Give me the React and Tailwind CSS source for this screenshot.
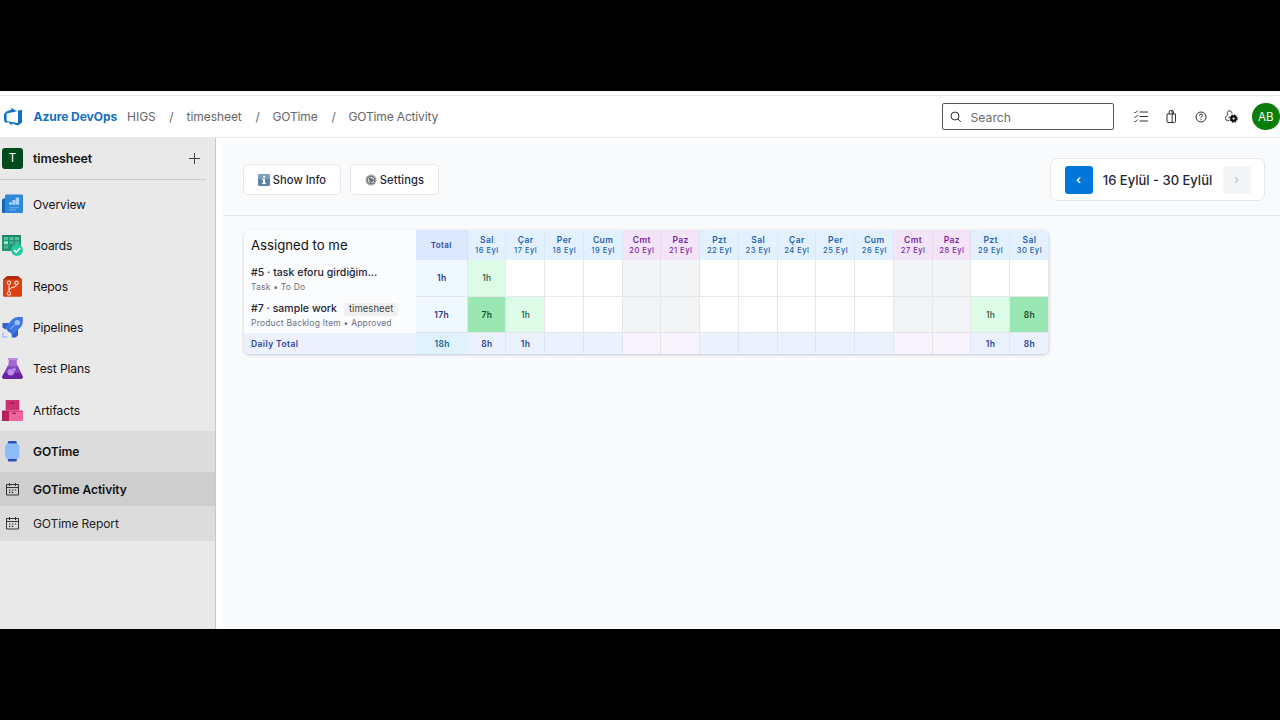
import React from 'react'

const days = [
    { name: 'Sal', date: '16 Eyl' },
    { name: 'Çar', date: '17 Eyl' },
    { name: 'Per', date: '18 Eyl' },
    { name: 'Cum', date: '19 Eyl' },
    { name: 'Cmt', date: '20 Eyl', weekend: true },
    { name: 'Paz', date: '21 Eyl', weekend: true },
    { name: 'Pzt', date: '22 Eyl' },
    { name: 'Sal', date: '23 Eyl' },
    { name: 'Çar', date: '24 Eyl' },
    { name: 'Per', date: '25 Eyl' },
    { name: 'Cum', date: '26 Eyl' },
    { name: 'Cmt', date: '27 Eyl', weekend: true },
    { name: 'Paz', date: '28 Eyl', weekend: true },
    { name: 'Pzt', date: '29 Eyl' },
    { name: 'Sal', date: '30 Eyl' },
]

const tasks = [
    { title: '#5 · task eforu girdiğim...', meta: 'Task • To Do', total: '1h', hours: { 0: 1 } },
    { title: '#7 · sample work', tag: 'timesheet', meta: 'Product Backlog Item • Approved', total: '17h', hours: { 0: 7, 1: 1, 13: 1, 14: 8 } },
]

const dailyTotals = { 0: 8, 1: 1, 13: 1, 14: 8 }

const gridCols = 'grid grid-cols-[172px_51.5px_repeat(15,38.75px)]'

/* ICONS */
const DevOpsLogo = () => (
    <svg width="20" height="20" viewBox="0 0 20 20" className="shrink-0">
        <path fill="#1170c4" fillRule="evenodd" d="M1 7.2 3 4.7 8.4 2.6V.8l5 3.2 5.6-1.3V15.4l-3.9 3.2-6.4-2.1v1.9L5 15.1 2.7 15.9 1 13.6ZM3.6 6.6v6.9l1.7 1.1 9.7 1.4V3.9Z" />
    </svg>
)

const OverviewIcon = () => (
    <svg width="21" height="20" viewBox="0 0 21 20">
        <path fill="#1565b5" d="M0 5.5 3 4v15H1.2A1.2 1.2 0 0 1 0 17.8Z" />
        <rect x="3" y=".5" width="18" height="18.5" rx="1" fill="#2f87d9" />
        <path fill="#9fd3fb" d="M7 8.2h3v2.6H7zM10.3 6h3v4.8h-3zM13.6 3.5h3.6v7.3h-3.6z" />
        <path fill="#69b4f1" d="M7 13.3h10v1H7zM7 15.5h7v1H7z" />
    </svg>
)

const BoardsIcon = () => (
    <svg width="21" height="21" viewBox="0 0 21 21">
        <rect y="0" width="19" height="16" rx=".8" fill="#219473" />
        <path fill="#118263" d="M0 0h19v1.5H0z" />
        <path fill="#56bd9d" d="M2 2h4v3H2zM7.5 2h4v3h-4zM13 2h4v3h-4z" />
        <path fill="#4db394" d="M7.5 6.2h4v3h-4zM13 6.2h4v3h-4zM2 10.5h4v3H2z" />
        <path fill="#94efd0" d="M2 6.2h4v3H2z" />
        <circle cx="15" cy="15" r="5.9" fill="#23c9a0" />
        <path d="m12 15 2.2 2.2 4-4.1" fill="none" stroke="#fff" strokeWidth="1.6" />
    </svg>
)

const ReposIcon = () => (
    <svg width="21" height="21" viewBox="0 0 21 21">
        <path fill="#b32a0c" d="M5 0h11l4 3.5v3H1v-3z" />
        <path fill="#dc4010" d="M1 3.5h19v16a1.3 1.3 0 0 1-1.3 1.3H2.3A1.3 1.3 0 0 1 1 19.5z" />
        <g fill="none" stroke="#ffd9cb" strokeWidth="1.1">
            <circle cx="7" cy="6.8" r="1.7" />
            <circle cx="14.5" cy="6.8" r="1.7" />
            <circle cx="7" cy="17.5" r="1.7" />
            <path d="M7 8.5v7.3M14.5 8.5c0 4-7.5 1.5-7.5 6.5" />
        </g>
    </svg>
)

const PipelinesIcon = () => (
    <svg width="21" height="21" viewBox="0 0 21 21">
        <path fill="#2d62d2" d="M.5 6h7l-4 6.500-3-2zM9.500 17l6.500-6v7.500L13.500 20.500H10z" />
        <path fill="#3f79e0" d="M20.800 0v4.500c0 3.500-2 6-5 8.500l-5.500 4.800-7-6.600L8 4.800C10.500 1.800 13 0 16.300 0z" />
        <path d="m6 14 7-6.500" stroke="#3266cd" strokeWidth="2.500" />
        <path d="m8 12.300 6.500-6" stroke="#78a6f6" strokeWidth="1.500" />
        <circle cx="15.300" cy="5.600" r="2.700" fill="#9dbffa" />
        <path fill="#a9c6f8" d="M0 15.500h1.800v3.500h3.500v1.800H0z" />
        <path fill="#dfe7f8" d="m2.500 12.800 5 5-2.700.9-3-3z" />
    </svg>
)

const TestPlansIcon = () => (
    <svg width="21" height="21" viewBox="0 0 21 21">
        <path fill="#a066d3" d="M6.7 0h8v5.8l5.7 12A2.1 2.1 0 0 1 18.5 21h-16A2.1 2.1 0 0 1 .6 17.8l6.1-12z" />
        <path fill="#7f42bb" d="M5.500 8.500h10.400l4.500 9.500a2 2 0 0 1-1.900 3h-16a2 2 0 0 1-1.900-3z" />
        <path fill="#6822a2" d="M2.200 15h16.600l1.600 3a2 2 0 0 1-1.900 3h-16a2 2 0 0 1-1.900-3z" />
        <path fill="#b98ce0" d="M6 0h9.500v2H6z" />
        <circle cx="8.800" cy="14.200" r="3.300" fill="#bd8be8" />
        <circle cx="12" cy="11.500" r="2" fill="#b27edf" />
    </svg>
)

const ArtifactsIcon = () => (
    <svg width="21" height="21" viewBox="0 0 21 21">
        <path fill="#c9316f" d="M3.7 0h13.6v10.5H3.7z" />
        <path fill="#b5205f" d="M0 10.5h7V21H0z" />
        <path fill="#dc3d7b" d="M7 10.5h14V14H7z" />
        <path fill="#f0649c" d="M7 12h14v9H7z" />
        <path fill="#861347" d="M9 2.5h3v1.2H9zM10.5 12.7h3v1.2h-3z" />
    </svg>
)

const WatchIcon = () => (
    <svg width="21" height="21" viewBox="0 0 21 21">
        <rect x="5.8" y="0" width="9" height="5" rx="1.5" fill="#2c50b5" />
        <rect x="5.8" y="15.5" width="9" height="5" rx="1.5" fill="#2c50b5" />
        <rect x="3" y="2.6" width="14.5" height="15.5" rx="3.5" fill="#8dbdf8" />
    </svg>
)

const CalendarIcon = () => (
    <svg width="13" height="13" viewBox="0 0 13 13" fill="none" stroke="#222" strokeWidth=".9">
        <path d="M.5 1.5h12v10.500H.5zM.5 4.500h12M3.500 0v3M9.500 0v3" />
        <path d="M3 7h1.300M5.900 7h1.300M8.800 7h1.300M3 9.300h1.300M5.900 9.300h1.300" strokeWidth="1.200" />
    </svg>
)

const navItems = [
    { label: 'Overview', icon: <OverviewIcon /> },
    { label: 'Boards', icon: <BoardsIcon /> },
    { label: 'Repos', icon: <ReposIcon /> },
    { label: 'Pipelines', icon: <PipelinesIcon /> },
    { label: 'Test Plans', icon: <TestPlansIcon /> },
    { label: 'Artifacts', icon: <ArtifactsIcon /> },
]

const Header = () => (
    <header className="h-[47px] shrink-0 flex flex-col bg-white border-b border-[#e9e9e9]">
        <div className="h-[5px] border-b border-[#e6e3f0]" />
        <div className="flex-1 flex items-center pl-[3px]">
            <DevOpsLogo />
            <div className="flex ml-[10.5px] pt-px text-[12px] tracking-[-0.15px] text-[#666] whitespace-nowrap">
                <span className="w-[93.5px] font-bold tracking-[-0.05px] text-[#1270c5]">Azure DevOps</span>
                <span className="w-[29px] tracking-normal">HIGS</span>
                <span className="w-[30.5px] text-center">/</span>
                <span className="w-[56px] tracking-[-0.05px]">timesheet</span>
                <span className="w-[30px] text-center">/</span>
                <span className="w-[46px]">GOTime</span>
                <span className="w-[30px] text-center">/</span>
                <span className="w-[90px]">GOTime Activity</span>
            </div>

            {/* SEARCH */}
            <div className="ml-auto w-[172px] h-[27px] flex items-center border border-[#555] rounded-[2px] pl-[7px] mr-5">
                <svg width="12" height="12" viewBox="0 0 12 12" fill="none" stroke="#333" strokeWidth="1">
                    <circle cx="5" cy="5" r="4" />
                    <path d="m7.900 7.900 3 3" />
                </svg>
                <span className="ml-[9px] pt-[3px] text-[12.200px] text-[#6b6b6b]">Search</span>
            </div>

            <svg width="14" height="13" viewBox="0 0 14 13" fill="none" stroke="#333" strokeWidth="1" className="mr-[18px]">
                <path d="M5.500 2H14M5.500 6.500H14M5.500 11H14M.3 2l1 1L3.700.6M.3 6.500l1 1 2.400-2.400M.3 11l1 1 2.400-2.400" />
            </svg>
            <svg width="11" height="13" viewBox="0 0 11 13" fill="none" stroke="#333" strokeWidth="1" className="mr-[18px]">
                <path d="M1 4h8.500v7.500a1 1 0 0 1-1 1H2a1 1 0 0 1-1-1zM3.200 4V2q0-1.500 1.500-1.500T6.200 2v10M4.800.5q2.700-.3 2.700 1.500v2" />
            </svg>
            <svg width="12" height="12" viewBox="0 0 12 12" fill="none" stroke="#333" strokeWidth="1" className="mr-[18px]">
                <circle cx="6" cy="6" r="5" />
                <path d="M4.400 4.700q0-1.600 1.600-1.600t1.600 1.500Q7.600 5.500 6 6.300V7.200M6 8.200v1" />
            </svg>
            <svg width="13" height="13" viewBox="0 0 13 13" fill="none" stroke="#333" strokeWidth="1" className="mr-[14.500px]">
                <path d="M3 4.800A2.300 2.300 0 1 1 6.800 3.500M3 4.800C1 5.500.5 7 .5 8.500q0 2 2.500 2h.8M3.400 8l1.700-1.500" />
                <circle cx="8.600" cy="8.600" r="2.200" stroke="#111" strokeWidth="2.200" />
                <circle cx="8.600" cy="8.600" r="3.500" stroke="#111" strokeWidth="1.200" strokeDasharray="1.700 1.050" />
            </svg>
            <div className="w-[27.500px] h-[27.500px] mr-[.5px] rounded-full bg-[#0b7d0b] text-white text-[11.500px] flex items-center justify-center pt-[2px]">AB</div>
        </div>
    </header>
)

const Sidebar = () => (
    <aside className="w-[216px] shrink-0 bg-[#e9e9e9] border-r border-[#c8c8c8] text-[12px] tracking-[-0.1px] text-[#111]">
        <div className="h-[42px] mr-[9px] flex items-center pl-[2px] border-b border-[#cfcfcf]">
            <div className="w-[21px] h-[21px] mb-px rounded-[3px] bg-[#004b1c] text-white text-[11.5px] flex items-center justify-center pt-[2px]">T</div>
            <span className="ml-[10px] pt-px text-[12.5px] font-semibold">timesheet</span>
            <svg width="11" height="11" viewBox="0 0 11 11" stroke="#444" strokeWidth="1" className="ml-auto mr-[6px] mb-px">
                <path d="M5.5 0v11M0 5.5h11" />
            </svg>
        </div>
        <nav className="pt-[3.5px]">
            {navItems.map((item) => (
                <div key={item.label} className="h-[41.2px] flex items-center pl-[2px]">
                    <span className="w-[21px] flex">{item.icon}</span>
                    <span className="ml-[10px] pt-px">{item.label}</span>
                </div>
            ))}
            <div className="h-[41.5px] flex items-center pl-[2px] bg-[#dcdcdc] font-semibold">
                <WatchIcon />
                <span className="ml-[10px] pt-[2px] tracking-[-0.1px]">GOTime</span>
            </div>
            <div className="h-[34px] flex items-center pl-[6px] bg-[#cecece] font-semibold">
                <CalendarIcon />
                <span className="ml-[14px] pt-[2px] tracking-[-0.05px]">GOTime Activity</span>
            </div>
            <div className="h-[34.5px] flex items-center pl-[6px] bg-[#dcdcdc] text-[#222]">
                <CalendarIcon />
                <span className="ml-[14px] pt-[2px]">GOTime Report</span>
            </div>
        </nav>
    </aside>
)

const Toolbar = () => (
    <div className="h-[72px] flex items-center pl-[20px] pr-[15px] border-b border-[#e3e6ea] text-[#1f2937]">
        <button className="w-[98px] h-[31px] rounded-[5px] border border-[#e5e7eb] bg-white flex items-center justify-center gap-[3px] text-[11.2px] font-medium">
            <svg width="12" height="12" viewBox="0 0 12 12">
                <rect width="12" height="12" rx="1.5" fill="#5e83a8" />
                <path d="M0 1.5A1.5 1.5 0 0 1 1.5 0h9A1.5 1.5 0 0 1 12 1.5V5H0z" fill="#7d9fbe" />
                <path d="M5 2h2v1.5H5zM4.3 4.8H7v4h.8V10H4.3V8.8H5V6h-.7z" fill="#fff" />
            </svg>
            <span className="pt-px">Show Info</span>
        </button>
        <button className="ml-[9px] w-[89px] h-[31px] rounded-[5px] border border-[#e5e7eb] bg-white flex items-center justify-center gap-[3px] text-[11.2px] font-medium">
            <svg width="12" height="12" viewBox="0 0 12 12" fill="none">
                <circle cx="6" cy="6" r="4.9" stroke="#8b8f95" strokeWidth="1.3" strokeDasharray="1 .54" />
                <circle cx="6" cy="6" r="3.7" stroke="#74787e" strokeWidth="1.5" />
                <circle cx="6" cy="6" r="2.5" fill="#8f9399" stroke="#c3c6ca" strokeWidth=".8" />
                <path d="m4 3.8 2.5 2.4-1 2.5M6.5 6.2h2" stroke="#3b3e43" strokeWidth=".9" />
            </svg>
            <span className="pt-px tracking-[0.1px]">Settings</span>
        </button>

        {/* DATE RANGE */}
        <div className="ml-auto w-[215px] h-[43px] rounded-[7px] border border-[#e5e7eb] bg-white flex items-center justify-center">
            <button className="w-[28px] h-[28px] rounded-[3px] bg-[#0078d9] text-white text-[12px] font-semibold pt-px">‹</button>
            <span className="w-[130px] pt-[2px] text-center text-[13px] font-medium whitespace-nowrap">16 Eylül - 30 Eylül</span>
            <button className="w-[28px] h-[28px] rounded-[3px] bg-[#f3f4f6] text-[#b5b9c0] text-[12px] pt-px">›</button>
        </div>
    </div>
)

const HourCell = ({ hours, weekend }) => {
    let bg = weekend ? 'bg-[#f3f4f6]' : 'bg-white'
    if (hours === 1) bg = 'bg-[#dcfce7] text-[#245236]'
    if (hours > 1) bg = 'bg-[#9be7b4] text-[#174b2c] font-semibold'
    return (
        <div className={`flex items-center justify-center pt-[2px] pl-px border-r border-b border-[#e5e7eb] ${bg}`}>
            {hours ? `${hours}h` : ''}
        </div>
    )
}

const Timesheet = () => (
    <div className="ml-[21px] mt-[14px] w-[805px] rounded-[6px] overflow-hidden shadow-[0_1px_3px_rgba(30,50,90,0.25)] text-[8.5px] font-medium tracking-[0.4px]">
        <div className={`${gridCols} h-[30px]`}>
            <div className="bg-[#fbfcfe] pl-[7px] pt-[2px] flex items-center text-[13.2px] font-normal tracking-normal text-[#111]">Assigned to me</div>
            <div className="bg-[#dbe8fe] flex items-center justify-center text-[8px] font-semibold text-[#3347a5] border-r border-[#d5e2f5]">Total</div>
            {days.map((day) => (
                <div
                    key={day.date}
                    className={`flex flex-col items-center justify-center pl-px border-r ${day.weekend ? 'bg-[#f3e5f7] text-[#7b1fa2] border-[#ead9ef]' : 'bg-[#e2f1fd] text-[#1f5fae] border-[#d8e8f5]'}`}
                >
                    <span className="text-[8.5px] leading-[11px] font-semibold">{day.name}</span>
                    <span className="text-[7.5px] leading-[10px] tracking-[0.5px]">{day.date}</span>
                </div>
            ))}
        </div>
        {tasks.map((task) => (
            <div key={task.title} className={`${gridCols} h-[36.5px]`}>
                <div className="bg-[#fbfcfe] pl-[7px] pt-[2px] flex flex-col justify-center">
                    <div className="h-[16px] flex items-center gap-[7px] text-[10.5px] tracking-[0.03px] text-[#1f2430] whitespace-nowrap">
                        {task.title}
                        {task.tag && <span className="h-[13px] px-[5px] rounded-[3px] bg-[#f0f0f1] text-[9.5px] font-normal text-[#444] flex items-center">{task.tag}</span>}
                    </div>
                    <div className="h-[13px] text-[8.5px] leading-[13px] font-normal tracking-[0.2px] text-[#6b7280] whitespace-nowrap">{task.meta}</div>
                </div>
                <div className="bg-[#eff7ff] flex items-center justify-center pt-[2px] pl-px font-semibold text-[#26358c] border-r border-b border-[#dfe6f0]">{task.total}</div>
                {days.map((day, i) => (
                    <HourCell key={day.date} hours={task.hours[i]} weekend={day.weekend} />
                ))}
            </div>
        ))}
        <div className={`${gridCols} h-[21px] font-semibold text-[#2e3f98]`}>
            <div className="bg-[#ebf2fe] pl-[7px] pt-px flex items-center">Daily Total</div>
            <div className="bg-[#dff2fe] flex items-center justify-center pt-px pl-px text-[#16658f]">18h</div>
            {days.map((day, i) => (
                <div key={day.date} className={`flex items-center justify-center pt-px pl-px border-r border-[#dfe5f1] ${day.weekend ? 'bg-[#f9f3fe]' : 'bg-[#ebf2fe]'}`}>
                    {dailyTotals[i] ? `${dailyTotals[i]}h` : ''}
                </div>
            ))}
        </div>
    </div>
)

const App = () => {
    return (
        <div className="w-[1280px] h-[720px] bg-black py-[91px] overflow-hidden font-['Inter',sans-serif]">
            <div className="h-[538px] flex flex-col bg-white">
                <Header />
                <div className="flex-1 flex min-h-0">
                    <Sidebar />
                    <main className="flex-1 ml-[7px] mt-[6px] bg-[#f9fafc]">
                        <Toolbar />
                        <Timesheet />
                    </main>
                </div>
            </div>
        </div>
    )
}

export default App
